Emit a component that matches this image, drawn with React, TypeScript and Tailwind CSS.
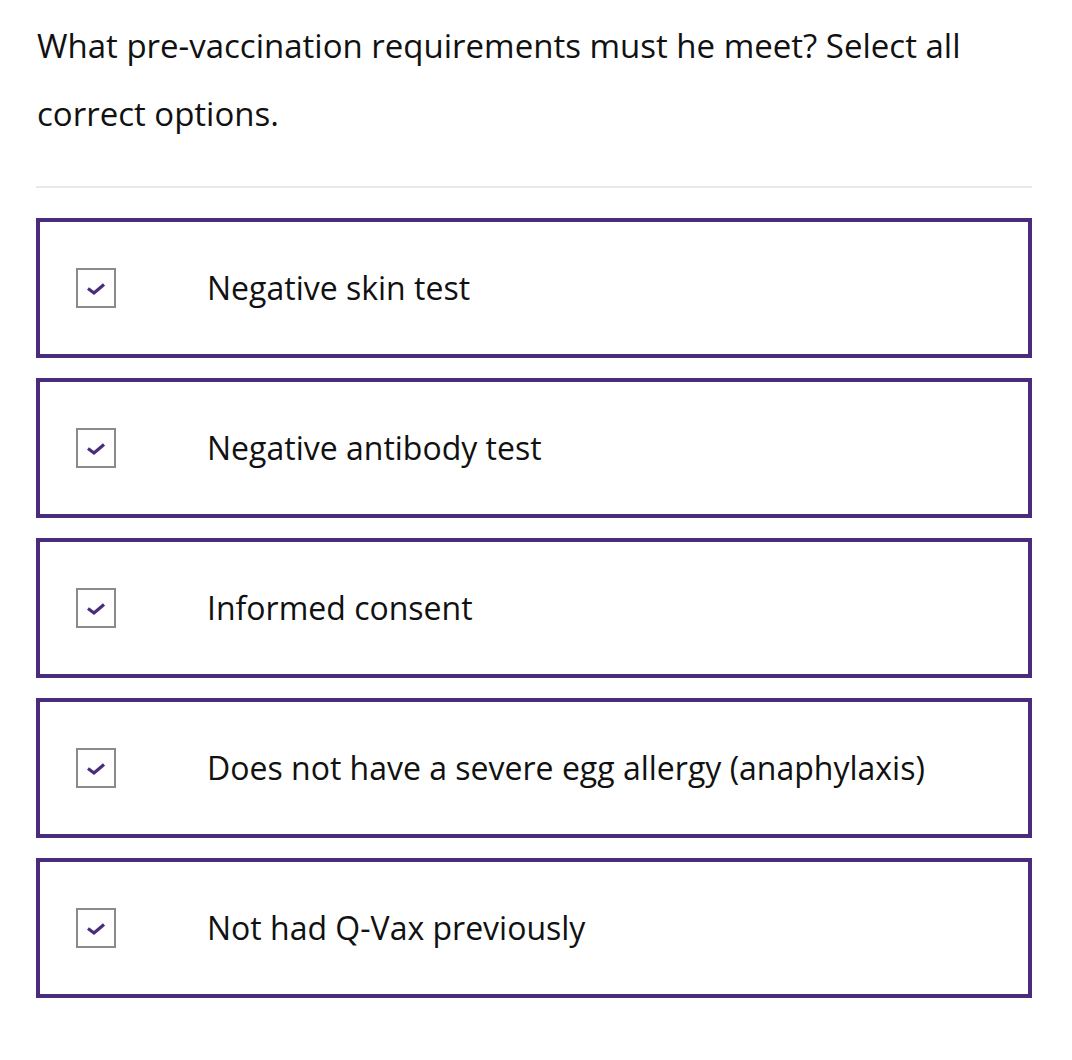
const options = [
  "Negative skin test",
  "Negative antibody test",
  "Informed consent",
  "Does not have a severe egg allergy (anaphylaxis)",
  "Not had Q-Vax previously",
];

function CheckIcon() {
  return (
    <svg viewBox="0 0 20 14" fill="none" className="h-[14px] w-[20px] shrink-0">
      <path d="M2 6.5 L8 11 L18 2.5" stroke="#4a2c7a" strokeWidth="3.2" />
    </svg>
  );
}

export default function App() {
  return (
    <div className="min-h-screen bg-white px-[36px] pt-[12px]" style={{ fontFamily: '"Open Sans", sans-serif' }}>
      <p className="text-[33px] leading-[68px] text-[#111] pl-px">
        What pre-vaccination requirements must he meet? Select all correct options.
      </p>
      <div className="mt-[38px] h-[2px] w-[996px] bg-[#e8e8e8]" />
      <div className="mt-[30px] flex w-[996px] flex-col gap-[20px]">
        {options.map((label) => (
          <label
            key={label}
            className="flex h-[140px] items-center border-4 border-[#4a2c7a] bg-white"
          >
            <span className="ml-[36px] flex h-[40px] w-[40px] shrink-0 items-center justify-center border-2 border-[#8a8a8a] pt-[2px]">
              <CheckIcon />
            </span>
            <span className="ml-[91px] text-[32px] text-[#111]">{label}</span>
          </label>
        ))}
      </div>
    </div>
  );
}
